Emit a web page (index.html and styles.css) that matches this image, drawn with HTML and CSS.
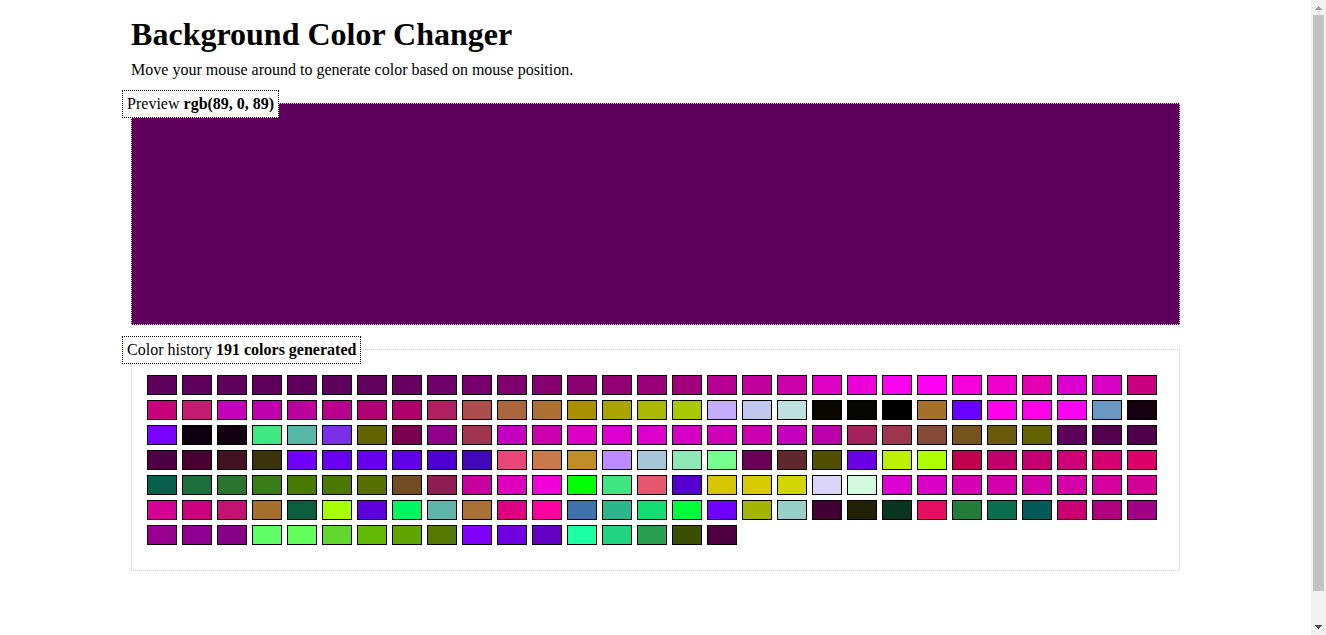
FILE: index.html
```html
<!DOCTYPE html>
<html lang="en">
<head>
<meta charset="utf-8">
<meta name="viewport" content="width=device-width, initial-scale=1">
<title>Background Color Changer</title>
<link rel="stylesheet" href="styles.css">
</head>
<body>
<div class="page">
  <main class="content">
    <h1 class="title">Background Color Changer</h1>
    <p class="intro">Move your mouse around to generate color based on mouse position.</p>
    <section class="panel preview">
      <div class="label">Preview <strong>rgb(89, 0, 89)</strong></div>
    </section>
    <section class="panel history">
      <div class="label">Color history <strong>191 colors generated</strong></div>
      <div class="swatches" id="swatches"></div>
    </section>
  </main>
</div>
<div class="scrollbar" aria-hidden="true">
  <svg class="arrow arrow-up" viewBox="0 0 15 15"><path d="M7 6h1v1h1v1h1v1h1v1H4V9h1V8h1V7h1z"/></svg>
  <div class="thumb"></div>
  <svg class="arrow arrow-down" viewBox="0 0 15 15"><path d="M4 5h7v1h-1v1H9v1H8v1H7V8H6V7H5V6H4z"/></svg>
</div>
<script src="script.js"></script>
</body>
</html>
```
FILE: styles.css
```css
* {
  box-sizing: border-box;
}

body {
  display: flex;
  min-height: 100vh;
  margin: 0;
  background: #fff;
  color: #000;
  font: 16px "Liberation Serif", "Times New Roman", serif;
}

.page {
  flex: 1;
  min-width: 0;
}

.content {
  width: 80%;
  margin: 0 auto;
  padding: 16px 0 64px;
}

.title {
  margin: 0 0 8px;
  font-size: 32px;
}

.intro {
  margin: 0;
}

.panel {
  position: relative;
  min-height: 222px;
  margin-top: 24px;
  border: 1px dotted #ccc;
}

.preview {
  background: #5e005c;
}

.history {
  padding: 25px 15px;
}

.label {
  position: absolute;
  top: -14px;
  left: -10px;
  padding: 4px;
  border: 1px dotted #000;
  background: #fff;
  white-space: nowrap;
}

.swatches {
  display: flex;
  flex-wrap: wrap;
  gap: 5px;
}

.swatch {
  width: 30px;
  height: 20px;
  border: 1px solid #000;
}

.scrollbar {
  position: sticky;
  top: 0;
  display: flex;
  flex-direction: column;
  width: 15px;
  height: 100vh;
  background: #f1f1f1;
}

.arrow {
  width: 15px;
  height: 15px;
  shape-rendering: crispEdges;
}

.arrow-up {
  fill: #a3a3a3;
}

.arrow-down {
  fill: #505050;
}

.thumb {
  flex: 1;
  margin: 0 2px 29px;
  background: #c1c1c1;
}
```
FILE: script.js
```js
const colors = `
5e005c 5e005c 5e005c 5e005c 5e005c 5e005c 62005e 680062 70006a 78006c 82006e 860070 8a0070 920074 9a0078 a4007e b80094 c0009c cc00a8 de00c4 ec00da fc00f0 ff00f4 f800dc f000cc e400b2 dc00d0 d800c4 c80080
c8007c c41c70 c400b8 c000ac bc009c b8008c b00074 b0006c b02060 ac4e4e ac663e ac7032 aa9000 aaa400 aab800 aac800 c4aefc c0c8ee bee0de 0a0600 060800 000200 a4702a 6a00ff ff00ec ff00e8 ff00f0 6a98c2 160010
7a00ff 0c000e 120010 3ee882 58b8a8 7a30e6 626400 7c0050 90008a a03450 c400c0 cc00ae dc00c4 dc00d0 dc00cc d400c4 d000b8 cc00b0 c400bc bc00ac a4225c 9c364e 884a38 74541c 6c5a0c 626200 5e005c 560050 500048
4e0044 480032 421222 3c340a 6e00fc 6800f2 6600ee 6000e8 4e00d0 4008b8 e8467a ca7a48 c08e28 be8aff a8c6da 8ee8b6 74ff90 6a0058 5e282c 505000 6a00e4 bcf000 b0ff00 c0004c c00068 c40070 cc0074 d60070 dc0068
08604c 1c6e3a 2a742e 3a7c16 467a00 4c7800 587000 744c24 901c54 c800a0 dc00bc f200dc 00ff00 40e682 e6566e 5600d0 d6c600 d8cc00 d4d600 dad4f8 d2f8de dc00d4 d800c4 d600b4 d400ac d200a8 d400a8 d6009e d20096
d20094 ca0080 c41272 a4702c 0c5e40 a8ff00 5e00dc 00f660 5eb6aa a87034 dc0080 ff00a0 3e72ac 2ab68a 16dc74 00ff38 7000ff a2b600 96d0c8 420032 222006 083620 e60e62 227c3a 0a6e4e 045a58 c80074 b00080 a00088
980090 900090 880088 60ff6a 62ff5c 62d82e 62ba06 60a400 547800 8000ff 7000e0 6400c4 1cffa2 20d480 289e50 3a5000 4e0040
`.trim().split(/\s+/);

const swatches = document.getElementById("swatches");

for (const color of colors) {
  const swatch = document.createElement("div");
  swatch.className = "swatch";
  swatch.style.backgroundColor = `#${color}`;
  swatches.append(swatch);
}
```
